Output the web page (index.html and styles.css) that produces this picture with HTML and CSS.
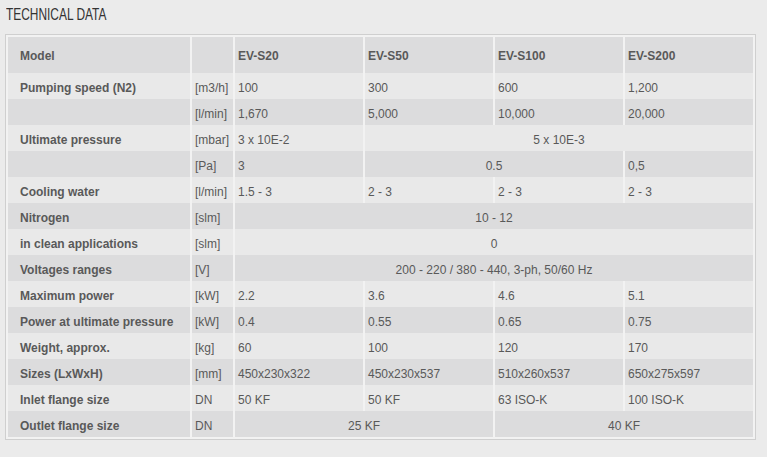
FILE: index.html
```html
<!DOCTYPE html>
<html>
<head>
<meta charset="utf-8">
<link rel="stylesheet" href="styles.css">
</head>
<body>
<div class="title-row"><h2 class="title">TECHNICAL DATA</h2></div>
<div class="box">
<table class="spec">
<colgroup>
<col class="c-label"><col class="c-unit"><col class="c-val"><col class="c-val"><col class="c-val"><col class="c-val">
</colgroup>
<tr class="head"><th class="label">Model</th><th class="unit"></th><th>EV-S20</th><th>EV-S50</th><th>EV-S100</th><th>EV-S200</th></tr>
<tr><td class="label">Pumping speed (N2)</td><td class="unit">[m3/h]</td><td>100</td><td>300</td><td>600</td><td>1,200</td></tr>
<tr><td class="label"></td><td class="unit">[l/min]</td><td>1,670</td><td>5,000</td><td>10,000</td><td>20,000</td></tr>
<tr><td class="label">Ultimate pressure</td><td class="unit">[mbar]</td><td>3 x 10E-2</td><td class="mid" colspan="3">5 x 10E-3</td></tr>
<tr><td class="label"></td><td class="unit">[Pa]</td><td>3</td><td class="mid" colspan="2">0.5</td><td>0,5</td></tr>
<tr><td class="label">Cooling water</td><td class="unit">[l/min]</td><td>1.5 - 3</td><td>2 - 3</td><td>2 - 3</td><td>2 - 3</td></tr>
<tr><td class="label">Nitrogen</td><td class="unit">[slm]</td><td class="mid" colspan="4">10 - 12</td></tr>
<tr><td class="label">in clean applications</td><td class="unit">[slm]</td><td class="mid" colspan="4">0</td></tr>
<tr><td class="label">Voltages ranges</td><td class="unit">[V]</td><td class="mid" colspan="4">200 - 220 / 380 - 440, 3-ph, 50/60 Hz</td></tr>
<tr><td class="label">Maximum power</td><td class="unit">[kW]</td><td>2.2</td><td>3.6</td><td>4.6</td><td>5.1</td></tr>
<tr><td class="label">Power at ultimate pressure</td><td class="unit">[kW]</td><td>0.4</td><td>0.55</td><td>0.65</td><td>0.75</td></tr>
<tr><td class="label">Weight, approx.</td><td class="unit">[kg]</td><td>60</td><td>100</td><td>120</td><td>170</td></tr>
<tr><td class="label">Sizes (LxWxH)</td><td class="unit">[mm]</td><td>450x230x322</td><td>450x230x537</td><td>510x260x537</td><td>650x275x597</td></tr>
<tr><td class="label">Inlet flange size</td><td class="unit">DN</td><td>50 KF</td><td>50 KF</td><td>63 ISO-K</td><td>100 ISO-K</td></tr>
<tr><td class="label">Outlet flange size</td><td class="unit">DN</td><td class="mid" colspan="2">25 KF</td><td class="mid" colspan="2">40 KF</td></tr>
</table>
</div>
</body>
</html>
```
FILE: styles.css
```css
html, body {
  margin: 0;
  padding: 0;
  background: #ebebeb;
}
body {
  font-family: "Liberation Sans", Arial, sans-serif;
  color: #555;
}
.title-row {
  height: 25px;
  margin-bottom: 9px;
  padding: 5px 6px 0;
  box-sizing: border-box;
}
.title {
  display: inline-block;
  margin: 0;
  line-height: 20px;
  font-family: "Liberation Sans", Arial, sans-serif;
  font-size: 16px;
  font-weight: normal;
  color: #333;
  transform: scaleX(0.745);
  transform-origin: left center;
}
.box {
  margin-left: 5px;
  width: 751px;
  box-sizing: border-box;
  border: 1px solid #cfcfcf;
  background: #f2f2f2;
  padding: 2px 0;
}
.spec {
  width: 749px;
  table-layout: fixed;
  border-collapse: separate;
  border-spacing: 2px 0;
  font-size: 12px;
}
.c-label { width: 182px; }
.c-unit { width: 41px; }
.c-val { width: 128px; }
.spec td, .spec th {
  padding: 4px 3px 0;
  text-align: left;
  white-space: nowrap;
  overflow: hidden;
  color: #595959;
}
.spec th { padding-top: 2px; font-weight: bold; }
.spec tr { height: 26px; background: #e9e9e9; }
.spec tr:nth-child(odd) { background: #dcdcdd; }
.spec tr.head { height: 36px; }
.spec .label {
  padding-left: 12px;
  font-weight: bold;
}
.spec .mid { text-align: center; }
```
